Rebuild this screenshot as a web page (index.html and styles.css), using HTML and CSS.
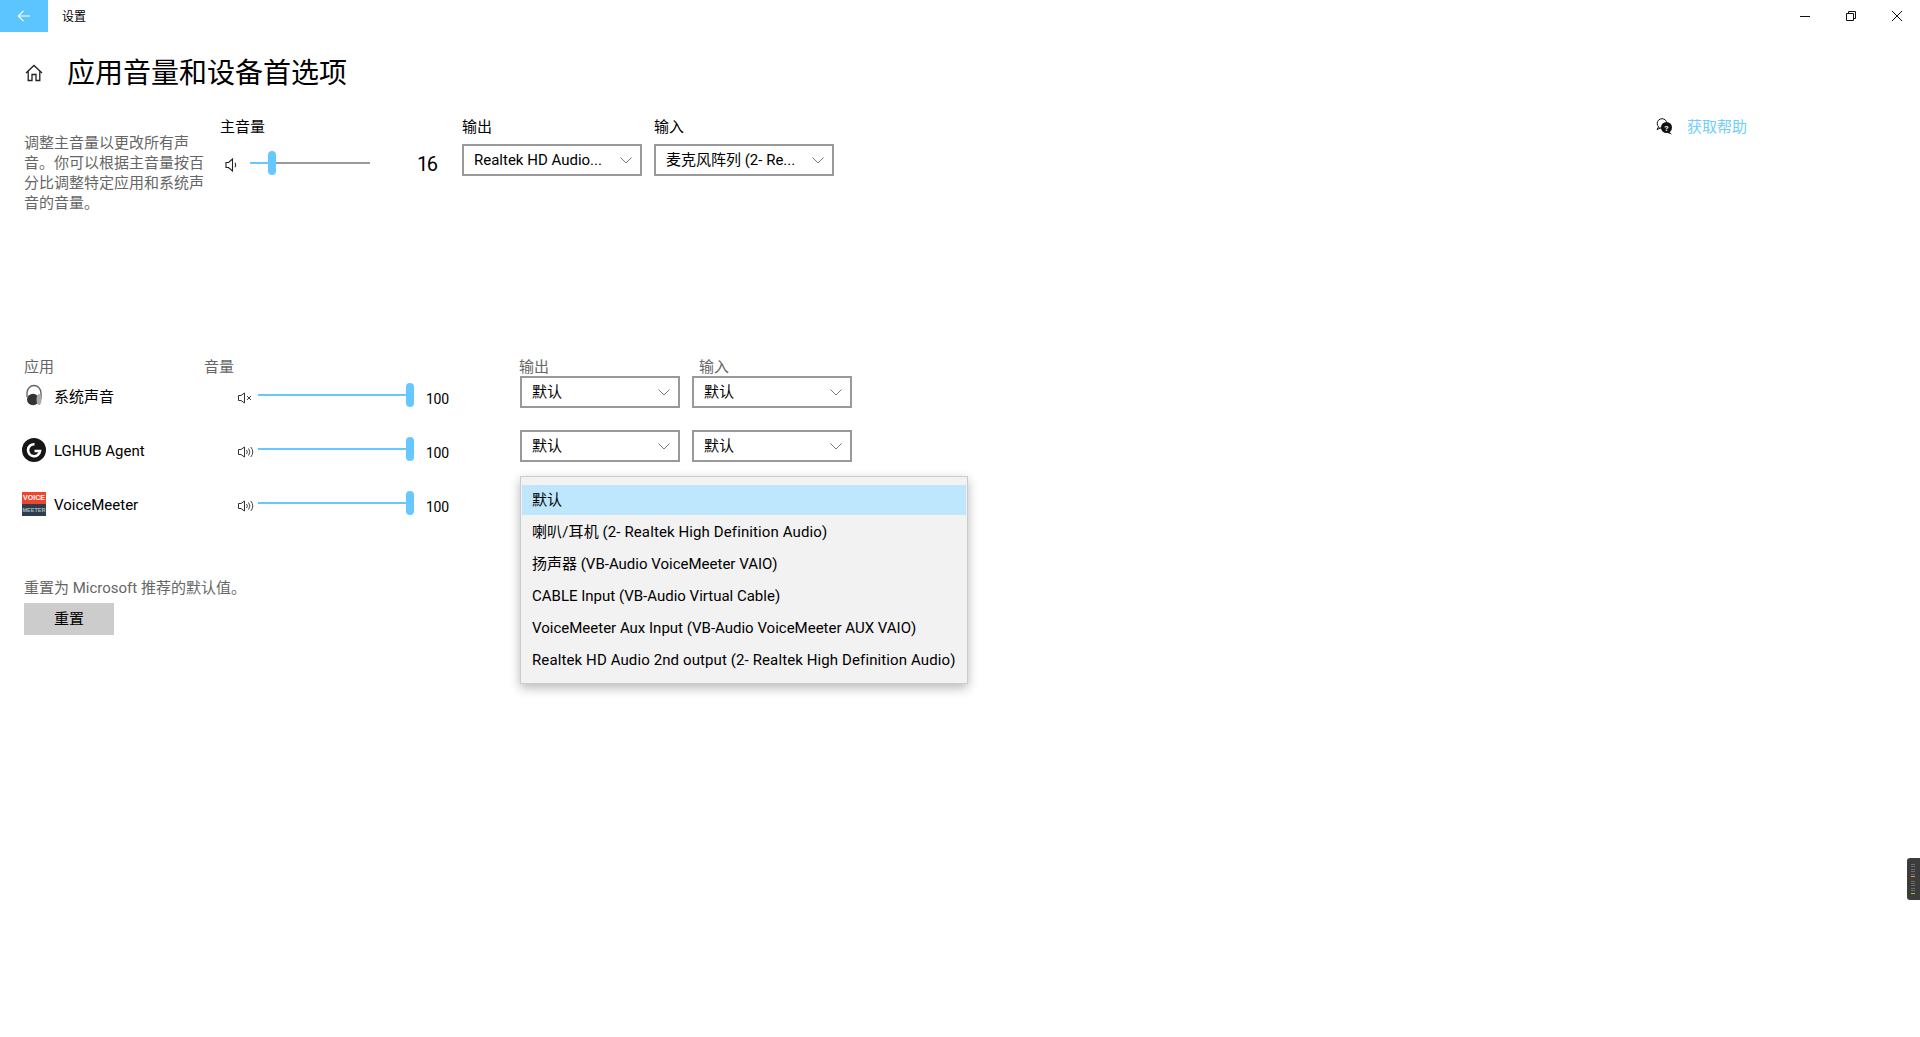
FILE: index.html
```html
<!DOCTYPE html>
<html lang="zh-CN">
<head>
<meta charset="utf-8">
<title>设置</title>
<link rel="stylesheet" href="styles.css">
</head>
<body>
<header class="titlebar">
  <div class="back"><svg width="16" height="16" viewBox="0 0 16 16"><path d="M14 8H2.5M7.5 2.8 2.3 8l5.2 5.2" fill="none" stroke="#fff" stroke-width="1.2"/></svg></div>
  <div class="app-name">设置</div>
  <div class="controls">
    <div class="ctl"><svg width="10" height="10" viewBox="0 0 10 10"><path d="M0 5.5H10" stroke="#111" stroke-width="1"/></svg></div>
    <div class="ctl"><svg width="10" height="10" viewBox="0 0 10 10"><path d="M.5 2.5h7v7h-7zM2.5 2.5v-2h7v7h-2" fill="none" stroke="#111" stroke-width="1"/></svg></div>
    <div class="ctl"><svg width="10" height="10" viewBox="0 0 10 10"><path d="M0 0 10 10M10 0 0 10" stroke="#111" stroke-width="1"/></svg></div>
  </div>
</header>

<div class="page-head">
  <svg class="home" width="18" height="18" viewBox="0 0 18 18"><path d="M1 9 9 1.500 17 9M3.200 7.200V16.500H7V10.500h4v6h3.800V7.200" fill="none" stroke="#222" stroke-width="1.300"/></svg>
  <h1 class="title">应用音量和设备首选项</h1>
</div>

<section class="master">
  <p class="desc">调整主音量以更改所有声音。你可以根据主音量按百分比调整特定应用和系统声音的音量。</p>
  <div class="master-vol">
    <div class="label">主音量</div>
    <div class="master-row">
      <svg class="spk-main" width="14" height="14" viewBox="0 0 14 14"><path d="M1 4.500h2.500L7.500 1v12L3.500 9.500H1z" fill="none" stroke="#222" stroke-width="1.100"/><path d="M10 4.800a4 4 0 0 1 0 4.400" fill="none" stroke="#222" stroke-width="1.100"/></svg>
      <div class="slider slider-main"><div class="track"><div class="fill fill-16"></div></div><div class="thumb thumb-16"></div></div>
      <div class="master-val">16</div>
    </div>
  </div>
  <div class="field">
    <div class="label">输出</div>
    <div class="select select-wide"><span>Realtek HD Audio...</span><svg class="chev" width="12" height="7" viewBox="0 0 12 7"><path d="M.5.500 6 6 11.500.500" fill="none" stroke="#777"/></svg></div>
  </div>
  <div class="field">
    <div class="label">输入</div>
    <div class="select select-wide"><span>麦克风阵列 (2- Re...</span><svg class="chev" width="12" height="7" viewBox="0 0 12 7"><path d="M.5.500 6 6 11.500.500" fill="none" stroke="#777"/></svg></div>
  </div>
  <div class="help">
    <svg width="17" height="17" viewBox="0 0 17 17"><circle cx="6" cy="5.500" r="4.800" fill="#fff" stroke="#111" stroke-width="1"/><path d="M2.500 9 1 11.500 4.500 10" fill="#fff" stroke="#111" stroke-width="1"/><circle cx="10.500" cy="9.500" r="5.500" fill="#111"/><path d="M13 13.500 16 16.500 11.500 15z" fill="#111"/><text class="help-q" x="10.500" y="12.500">?</text></svg>
    <span class="help-text">获取帮助</span>
  </div>
</section>

<section class="apps">
  <div class="apps-head"><span class="h-app">应用</span><span class="h-vol">音量</span><span class="h-out">输出</span><span>输入</span></div>

  <div class="app-row">
    <div class="app-id">
      <svg class="app-icon" width="24" height="24" viewBox="0 0 24 24"><path d="M5 13V9a7 7.500 0 0 1 14 0V15" fill="none" stroke="#666" stroke-width="1.400"/><ellipse cx="11" cy="15.500" rx="6" ry="5.800" fill="#333"/><ellipse cx="17" cy="15.500" rx="2.500" ry="5.500" fill="#aaa"/></svg>
      <span class="app-name-cell">系统声音</span>
    </div>
    <svg class="spk" width="20" height="14" viewBox="0 0 20 14"><path d="M.500 4.500h2.500L6.500 2v10L3 9.500H.500z" fill="none" stroke="#333" stroke-width="1"/><path d="M9 5l4 4M13 5 9 9" stroke="#444" stroke-width="1"/></svg>
    <div class="slider slider-app"><div class="track"><div class="fill fill-100"></div></div><div class="thumb thumb-100"></div></div>
    <div class="app-val">100</div>
    <div class="select select-app"><span>默认</span><svg class="chev" width="12" height="7" viewBox="0 0 12 7"><path d="M.5.500 6 6 11.500.500" fill="none" stroke="#777"/></svg></div>
    <div class="select select-app"><span>默认</span><svg class="chev" width="12" height="7" viewBox="0 0 12 7"><path d="M.5.500 6 6 11.500.500" fill="none" stroke="#777"/></svg></div>
  </div>

  <div class="app-row">
    <div class="app-id">
      <svg class="app-icon" width="24" height="24" viewBox="0 0 24 24"><circle cx="12" cy="12" r="12" fill="#161616"/><path d="M12.500 6.200A6 6 0 1 0 18 13H12.500" fill="none" stroke="#fff" stroke-width="2.600"/></svg>
      <span class="app-name-cell">LGHUB Agent</span>
    </div>
    <svg class="spk" width="20" height="14" viewBox="0 0 20 14"><path d="M.500 4.500h2.500L6.500 2v10L3 9.500H.500z" fill="none" stroke="#333" stroke-width="1"/><path d="M8.500 5a3 3 0 0 1 0 4M10.500 3.500a5.500 5.500 0 0 1 0 7M12.800 2a8 8 0 0 1 0 10" fill="none" stroke="#444" stroke-width="1"/></svg>
    <div class="slider slider-app"><div class="track"><div class="fill fill-100"></div></div><div class="thumb thumb-100"></div></div>
    <div class="app-val">100</div>
    <div class="select select-app"><span>默认</span><svg class="chev" width="12" height="7" viewBox="0 0 12 7"><path d="M.5.500 6 6 11.500.500" fill="none" stroke="#777"/></svg></div>
    <div class="select select-app"><span>默认</span><svg class="chev" width="12" height="7" viewBox="0 0 12 7"><path d="M.5.500 6 6 11.500.500" fill="none" stroke="#777"/></svg></div>
  </div>

  <div class="app-row">
    <div class="app-id">
      <div class="vm-icon"><span class="vm-top">VOICE</span><span class="vm-bot">MEETER</span></div>
      <span class="app-name-cell">VoiceMeeter</span>
    </div>
    <svg class="spk" width="20" height="14" viewBox="0 0 20 14"><path d="M.500 4.500h2.500L6.500 2v10L3 9.500H.500z" fill="none" stroke="#333" stroke-width="1"/><path d="M8.500 5a3 3 0 0 1 0 4M10.500 3.500a5.500 5.500 0 0 1 0 7M12.800 2a8 8 0 0 1 0 10" fill="none" stroke="#444" stroke-width="1"/></svg>
    <div class="slider slider-app"><div class="track"><div class="fill fill-100"></div></div><div class="thumb thumb-100"></div></div>
    <div class="app-val">100</div>
  </div>

  <p class="reset-text">重置为 Microsoft 推荐的默认值。</p>
  <div class="reset-btn">重置</div>
</section>

<div class="dropdown">
  <div class="opt opt-on">默认</div>
  <div class="opt opt-wide">喇叭/耳机 (2- Realtek High Definition Audio)</div>
  <div class="opt">扬声器 (VB-Audio VoiceMeeter VAIO)</div>
  <div class="opt">CABLE Input (VB-Audio Virtual Cable)</div>
  <div class="opt">VoiceMeeter Aux Input (VB-Audio VoiceMeeter AUX VAIO)</div>
  <div class="opt opt-wide">Realtek HD Audio 2nd output (2- Realtek High Definition Audio)</div>
</div>

<div class="meter">
  <div class="meter-col"><i></i><i></i><i></i><i></i><i></i><i class="m-or"></i></div>
  <div class="meter-col"><i></i><i></i><i></i><i></i><i></i><i class="m-gr"></i></div>
</div>
</body>
</html>
```

FILE: styles.css
```css
* { box-sizing: border-box; }
html, body { margin: 0; height: 100%; }
body {
  position: relative;
  height: 1037px;
  overflow: hidden;
  background: #fff;
  color: #000;
  font-family: "Roboto", "Noto Sans CJK SC", sans-serif;
  font-size: 15px;
  line-height: 20px;
}
.titlebar { display: flex; align-items: center; height: 32px; }
.back { width: 48px; height: 32px; background: #5cc4ff; display: flex; align-items: center; justify-content: center; }
.app-name { margin: 2px 0 0 14px; font-size: 12px; }
.controls { margin-left: auto; display: flex; }
.ctl { width: 46px; height: 32px; display: flex; align-items: center; justify-content: center; }

.page-head { display: flex; align-items: center; height: 40px; margin-top: 21px; padding-left: 25px; }
.home { margin-right: 24px; }
.title { margin: 2px 0 0; font-size: 28px; font-weight: 400; line-height: 40px; }

.master { display: flex; align-items: flex-start; height: 240px; margin-top: 24px; padding-left: 24px; }
.desc { width: 182px; margin: 16px 14px 0 0; color: #666; }
.master-vol { width: 242px; }
.master-row { display: flex; align-items: center; height: 32px; margin-top: 10px; padding-left: 5px; }
.spk-main { margin: 4px 11px 0 0; }
.master-val { margin: 2px 0 0 47px; font-size: 20px; letter-spacing: -1.5px; }
.label { height: 20px; }
.field { width: 180px; margin-right: 12px; }
.select { display: flex; align-items: center; justify-content: space-between; height: 32px; border: 2px solid #999; padding: 0 8px 0 10px; white-space: nowrap; }
.field .select { margin-top: 7px; }
.select-app { width: 160px; margin-right: 12px; }
.help { display: flex; align-items: center; margin-left: auto; padding-right: 172px; }
.help svg { margin: -2px 14px 0 -1px; }
.help-q { font-size: 8px; font-weight: 700; fill: #fff; text-anchor: middle; }
.help-text { color: #6fcdff; margin-right: 1px; }

.slider { position: relative; height: 24px; display: flex; align-items: center; }
.slider-main { width: 120px; }
.slider-app { width: 156px; margin-top: 7px; }
.track { width: 100%; height: 2px; background: #999; }
.slider-app .track { width: 152px; }
.fill { height: 100%; background: #66c8ff; }
.fill-16 { width: 20px; }
.fill-100 { width: 100%; }
.thumb { position: absolute; top: 0; width: 8px; height: 24px; border-radius: 4px; background: #66c8ff; }
.thumb-16 { left: 18px; }
.thumb-100 { right: 0; }

.apps { padding-left: 22px; }
.apps-head { display: flex; height: 19px; color: #666; padding-left: 2px; }
.h-app { width: 180px; }
.h-vol { width: 315px; }
.h-out { width: 180px; }
.app-row { display: flex; align-items: flex-start; height: 54px; }
.app-id { display: flex; align-items: center; width: 216px; height: 24px; margin-top: 8px; }
.app-icon { margin-right: 8px; flex: none; }
.app-name-cell { margin-top: 2px; }
.spk { flex: none; margin-top: 15px; }
.app-val { width: 106px; margin-top: 13px; padding-left: 12px; font-size: 14px; letter-spacing: -.3px; }
.vm-icon { display: flex; flex-direction: column; width: 24px; height: 24px; margin-right: 8px; flex: none; font-family: "Liberation Sans", sans-serif; font-weight: 700; text-align: center; overflow: hidden; }
.vm-top { height: 12px; background: #f0452c; color: #fff; font-size: 7px; line-height: 12px; }
.vm-bot { height: 12px; background: #2e3d4d; color: #aab6c0; font-size: 5.5px; line-height: 12px; }

.reset-text { margin: 40px 0 0 2px; color: #666; }
.reset-btn { width: 90px; height: 32px; margin: 5px 0 0 2px; background: #ccc; text-align: center; line-height: 33px; }

.dropdown { position: absolute; left: 520px; top: 476px; width: 448px; height: 208px; padding: 8px 1px 0; background: #f2f2f2; border: 1px solid #ccc; box-shadow: 0 4px 10px rgba(0,0,0,.28); }
.opt { height: 30px; margin-bottom: 2px; padding-left: 10px; line-height: 30px; white-space: nowrap; }
.opt-on { background: #bee6fd; }
.opt-wide { letter-spacing: .11px; }

.meter { position: absolute; right: 0; top: 858px; width: 13px; height: 42px; padding: 6px 0 0 4px; background: #3c3c3c; border-radius: 3px 0 0 3px; }
.meter-col { margin-bottom: 3.6px; }
.meter i { display: block; width: 4px; height: 1px; background: #6b6b6b; margin-bottom: 1.4px; }
.meter i.m-or { background: #f0a000; }
.meter i.m-gr { background: #7be000; }
```
